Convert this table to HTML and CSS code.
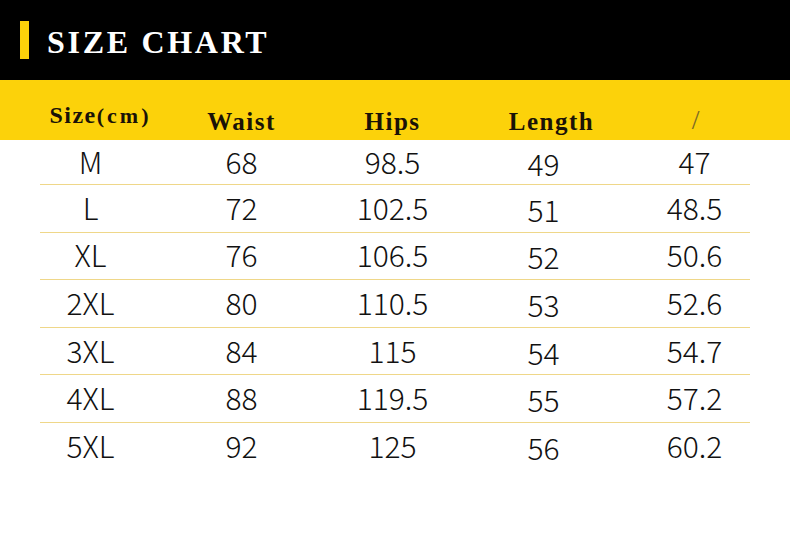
FILE: index.html
```html
<!DOCTYPE html>
<html>
<head>
<meta charset="utf-8">
<link rel="stylesheet" href="styles.css">
</head>
<body>
<div class="page">
  <header class="top">
    <span class="bar"></span>
    <h1 class="title">SIZE CHART</h1>
  </header>
  <div class="head-row">
    <div class="hc hc-size">Size<small>(cm)</small></div>
    <div class="hc">Waist</div>
    <div class="hc">Hips</div>
    <div class="hc hc-len">Length</div>
    <div class="hc hc-slash">/</div>
  </div>
  <div class="table">
    <div class="row first"><span>M</span><span>68</span><span>98.5</span><span class="low">49</span><span>47</span></div>
    <div class="row"><span>L</span><span>72</span><span>102.5</span><span class="low">51</span><span>48.5</span></div>
    <div class="row"><span>XL</span><span>76</span><span>106.5</span><span class="low">52</span><span>50.6</span></div>
    <div class="row"><span>2XL</span><span>80</span><span>110.5</span><span class="low">53</span><span>52.6</span></div>
    <div class="row"><span>3XL</span><span>84</span><span>115</span><span class="low">54</span><span>54.7</span></div>
    <div class="row"><span>4XL</span><span>88</span><span>119.5</span><span class="low">55</span><span>57.2</span></div>
    <div class="row last"><span>5XL</span><span>92</span><span>125</span><span class="low">56</span><span>60.2</span></div>
  </div>
</div>
</body>
</html>
```
FILE: styles.css
```css
html, body {
  margin: 0;
  padding: 0;
  background: #fff;
}
.page {
  width: 790px;
  height: 536px;
  overflow: hidden;
  background: #fff;
}
.top {
  height: 80px;
  background: #000;
  display: flex;
  align-items: center;
  box-sizing: border-box;
  padding-left: 20px;
}
.bar {
  width: 9px;
  height: 38px;
  background: #fcd20a;
}
.title {
  margin: 0 0 0 18px;
  color: #fff;
  font-family: "Liberation Serif", serif;
  font-weight: bold;
  font-size: 32px;
  letter-spacing: 2.7px;
  line-height: 1;
  padding-top: 4px;
}
.head-row {
  height: 60px;
  background: #fcd20a;
  display: grid;
  grid-template-columns: repeat(5, 151px);
  padding-left: 15px;
  align-items: end;
  font-family: "Liberation Serif", serif;
  font-weight: bold;
  color: #1a1207;
}
.hc {
  text-align: center;
  font-size: 25px;
  letter-spacing: 1.5px;
  line-height: 1;
  padding-bottom: 6px;
}
.hc-size {
  padding-bottom: 13px;
  padding-left: 20px;
  font-size: 24px;
  letter-spacing: 1.5px;
  white-space: nowrap;
}
.hc-size small {
  font-size: 22px;
  letter-spacing: 3px;
}
.hc-len {
  padding-left: 16px;
}
.hc-slash {
  font-weight: normal;
  color: #7d6a25;
  font-size: 28px;
  padding-bottom: 6px;
  padding-left: 4px;
}
.table {
  display: flex;
  flex-direction: column;
}
.row {
  display: grid;
  grid-template-columns: repeat(5, 151px);
  padding-left: 15px;
  padding-bottom: 4px;
  box-sizing: border-box;
  height: 47.6px;
  align-items: center;
  font-family: "Noto Sans CJK SC Light", "Noto Sans CJK SC DemiLight", "Noto Sans CJK SC", "Noto Sans", sans-serif;
  font-weight: 200;
  font-size: 30px;
  color: #111;
  background-image: linear-gradient(#efd789, #efd789);
  background-size: 710px 1px;
  background-position: 40px bottom;
  background-repeat: no-repeat;
}
.row.first {
  height: 45px;
}
.row.last {
  background-image: none;
}
.row span {
  text-align: center;
  line-height: 1;
}
.row .low {
  padding-top: 4px;
}
```
